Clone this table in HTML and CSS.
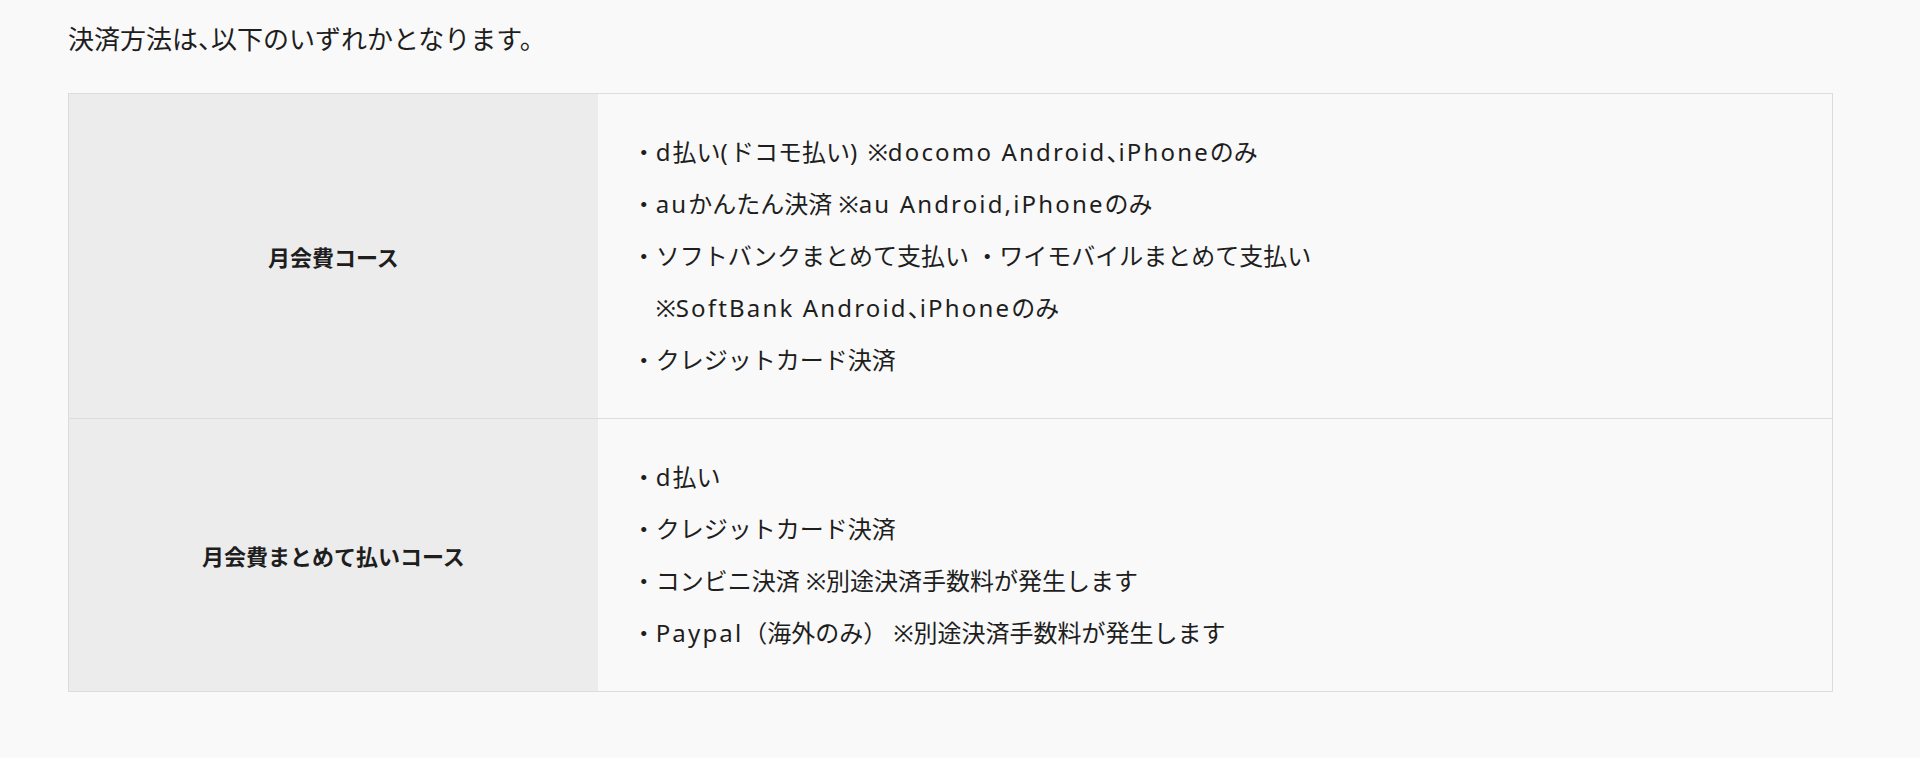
FILE: index.html
```html
<!DOCTYPE html>
<html lang="ja">
<head>
<meta charset="utf-8">
<title>決済方法</title>
<link rel="stylesheet" href="styles.css">
</head>
<body>
<main class="content">
  <p class="intro">決済方法は<span class="hw">、</span>以下のいずれかとなります。</p>
  <table class="pay-table">
    <tbody>
      <tr>
        <th>月会費コース</th>
        <td>・<span class="en">d</span>払い<span class="en">(</span>ドコモ払い<span class="en">) </span>※<span class="en">docomo Android</span><span class="hw">、</span><span class="en">iPhone</span>のみ<br>・<span class="en">au</span>かんたん決済 ※<span class="en">au Android,iPhone</span>のみ<br>・ソフトバンクまとめて支払い ・ワイモバイルまとめて支払い<br>　※<span class="en">SoftBank Android</span><span class="hw">、</span><span class="en">iPhone</span>のみ<br>・クレジットカード決済</td>
      </tr>
      <tr>
        <th>月会費まとめて払いコース</th>
        <td>・<span class="en">d</span>払い<br>・クレジットカード決済<br>・コンビニ決済 ※別途決済手数料が発生します<br>・<span class="en">Paypal</span>（海外のみ） ※別途決済手数料が発生します</td>
      </tr>
    </tbody>
  </table>
</main>
</body>
</html>
```

FILE: styles.css
```css
html, body {
  margin: 0;
  padding: 0;
  background: #f9f9f9;
}

body {
  font-family: "Noto Sans", "Noto Sans CJK JP", sans-serif;
  color: #1e1e1e;
}

.content {
  padding: 21px 87px 0 68px;
}

.intro {
  margin: 0;
  font-size: 26px;
  line-height: 36px;
}

.hw {
  font-feature-settings: "halt";
}

.en {
  letter-spacing: 0.09em;
}

.pay-table {
  width: 100%;
  margin-top: 36px;
  border-collapse: collapse;
  border: 1px solid #dcdcdc;
}

.pay-table tr {
  border-bottom: 1px solid #dcdcdc;
}

.pay-table th {
  width: 30%;
  background: #ececec;
  font-size: 22px;
  font-weight: 700;
  text-align: center;
  vertical-align: middle;
  padding: 0;
}

.pay-table td {
  background: #f9f9f9;
  font-size: 24px;
  line-height: 52px;
  padding: 32px 30px 32px 34px;
  text-align: left;
  vertical-align: middle;
}
```
